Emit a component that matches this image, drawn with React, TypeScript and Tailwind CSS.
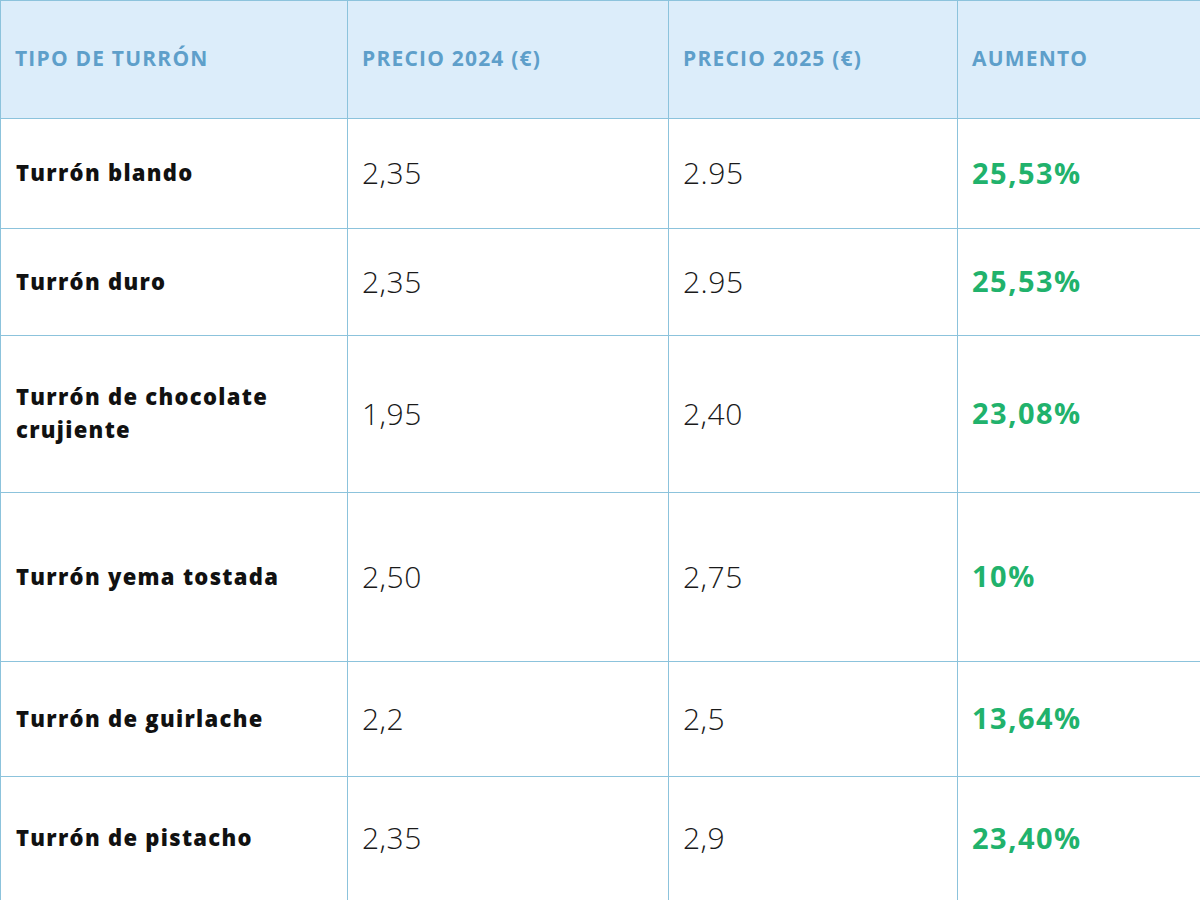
import React from 'react';

interface Row {
  name: string;
  p2024: string;
  p2025: string;
  rise: string;
}

const rows: Row[] = [
  { name: 'Turrón blando', p2024: '2,35', p2025: '2.95', rise: '25,53%' },
  { name: 'Turrón duro', p2024: '2,35', p2025: '2.95', rise: '25,53%' },
  { name: 'Turrón de chocolate crujiente', p2024: '1,95', p2025: '2,40', rise: '23,08%' },
  { name: 'Turrón yema tostada', p2024: '2,50', p2025: '2,75', rise: '10%' },
  { name: 'Turrón de guirlache', p2024: '2,2', p2025: '2,5', rise: '13,64%' },
  { name: 'Turrón de pistacho', p2024: '2,35', p2025: '2,9', rise: '23,40%' },
];

const headers = ['TIPO DE TURRÓN', 'PRECIO 2024 (€)', 'PRECIO 2025 (€)', 'AUMENTO'];

const font = "font-['Open_Sans','Noto_Sans',sans-serif]";
const cell = 'flex items-center border-r border-b border-[#8cc3dc]';

const App: React.FC = () => {
  return (
    <div className={`w-[1200px] h-[900px] bg-white ${font}`}>
      <div className="grid h-full grid-cols-[347px_321px_289px_243px] grid-rows-[118px_110px_107px_157px_169px_115px_124px] border-l border-t border-[#8cc3dc]">
        {headers.map((h) => (
          <div
            key={h}
            className={`${cell} bg-[#dcedfa] pl-[14px] pb-[2px] text-[21px] font-bold tracking-[1.2px] text-[#5e9fca]`}
          >
            {h}
          </div>
        ))}
        {rows.map((r) => (
          <React.Fragment key={r.name}>
            <div className={`${cell} pl-[15px] pr-[30px] pb-[2px] text-[22px] font-extrabold tracking-[1.3px] leading-[33px] text-[#111]`}>
              {r.name}
            </div>
            <div className={`${cell} pl-[14px] pb-[2px] text-[30px] font-light tracking-[0.5px] text-[#1a1a1a]`}>
              {r.p2024}
            </div>
            <div className={`${cell} pl-[14px] pb-[2px] text-[30px] font-light tracking-[0.5px] text-[#1a1a1a]`}>
              {r.p2025}
            </div>
            <div className={`${cell} pl-[14px] pb-[2px] text-[29px] font-bold tracking-[1.5px] text-[#21b26c]`}>
              {r.rise}
            </div>
          </React.Fragment>
        ))}
      </div>
    </div>
  );
};

export default App;
